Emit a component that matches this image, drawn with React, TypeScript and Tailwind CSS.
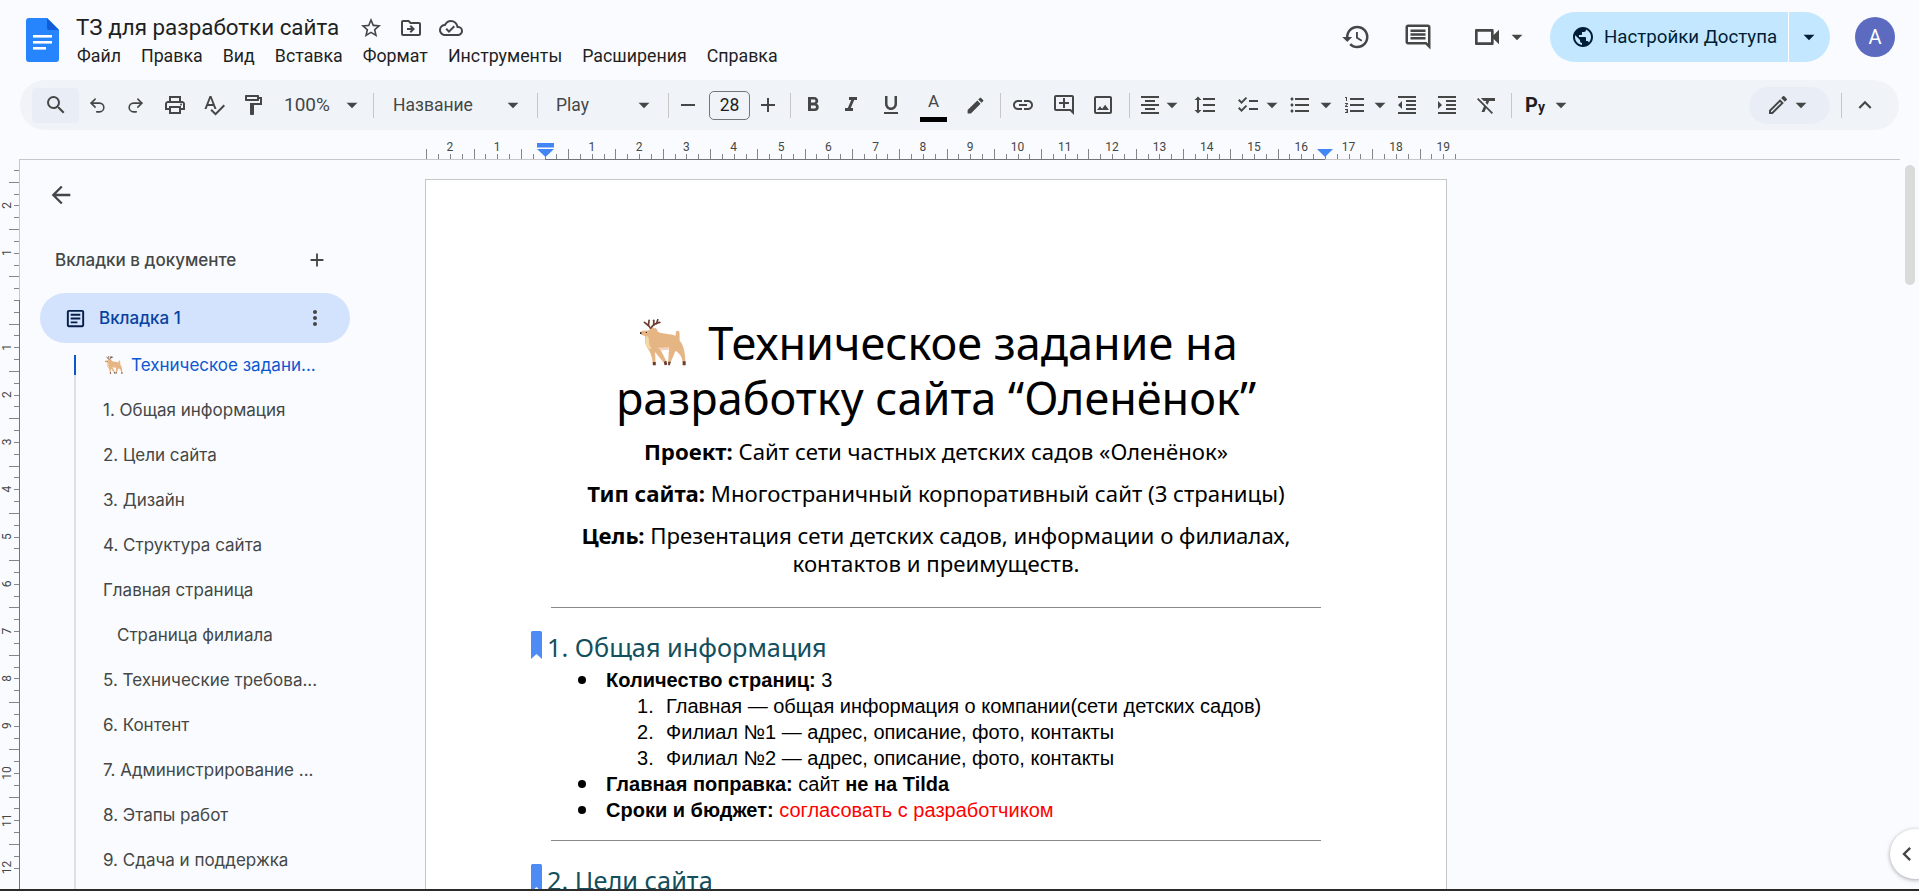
import {
  MdAdd,
  MdArrowBack,
  MdArrowDropDown,
  MdChecklist,
  MdChevronLeft,
  MdEdit,
  MdExpandLess,
  MdFormatAlignCenter,
  MdFormatBold,
  MdFormatClear,
  MdFormatIndentDecrease,
  MdFormatIndentIncrease,
  MdFormatItalic,
  MdFormatLineSpacing,
  MdFormatListBulleted,
  MdFormatListNumbered,
  MdFormatUnderlined,
  MdHistory,
  MdLink,
  MdMoreVert,
  MdOutlineAddComment,
  MdOutlineArticle,
  MdOutlineCloudDone,
  MdOutlineComment,
  MdOutlineDriveFileMove,
  MdOutlineEdit,
  MdOutlineFormatPaint,
  MdOutlineImage,
  MdOutlinePrint,
  MdOutlineVideocam,
  MdPublic,
  MdRemove,
  MdSearch,
  MdSpellcheck,
  MdStarBorder,
} from 'react-icons/md';
import { Redo2, Undo2 } from 'lucide-react';
import type { IconType } from 'react-icons';

const MENU = ['Файл', 'Правка', 'Вид', 'Вставка', 'Формат', 'Инструменты', 'Расширения', 'Справка'];

const OUTLINE = [
  { label: '1. Общая информация' },
  { label: '2. Цели сайта' },
  { label: '3. Дизайн' },
  { label: '4. Структура сайта' },
  { label: 'Главная страница' },
  { label: 'Страница филиала', nested: true },
  { label: '5. Технические требова...' },
  { label: '6. Контент' },
  { label: '7. Администрирование ...' },
  { label: '8. Этапы работ' },
  { label: '9. Сдача и поддержка' },
];

const CM = 47.3;

function Deer({ className }: { className: string }) {
  return (
    <svg viewBox="35 28 140 140" className={className}>
      <g fill="none" stroke="#6b3d2c" strokeWidth="5" strokeLinecap="round">
        <path d="M68 58 C62 46 56 44 48 38" />
        <path d="M60 47 L62 32" />
        <path d="M68 56 C72 44 82 40 94 38" />
        <path d="M76 46 L76 32" />
        <path d="M84 42 L88 30" />
      </g>
      <path
        d="M60 62 C72 52 85 50 88 66 C100 72 125 72 141 78 L142 66 C146 60 153 63 153 72 L153 92 C165 106 170 130 170 156 L162 156 C160 138 150 127 140 123 C136 135 129 150 126 158 L119 158 C120 142 120 127 122 119 L96 119 C101 131 110 145 114 156 L106 158 C96 146 86 133 79 126 C81 136 81 146 81 158 L73 158 C71 141 66 126 58 116 C48 102 50 86 50 79 L39 75 C33 72 36 66 42 63 Z"
        fill="#e6b584"
      />
      <path d="M52 80 C58 76 62 84 62 96 C62 106 66 112 70 118 L58 116 C50 104 50 88 52 80 Z" fill="#f4d9a8" />
      <path d="M88 114 L122 112 L122 119 L96 122 Z" fill="#f5d3c4" />
      <path d="M73 156 H82 V166 H73 Z M106 155 L114 153 L116 164 L108 166 Z M119 155 H127 L124 166 H119 Z M162 154 H171 V166 H162 Z" fill="#6b3d2c" />
      <circle cx="37" cy="70" r="3" fill="#3a2a25" />
      <circle cx="54" cy="68" r="2" fill="#3a2a25" />
    </svg>
  );
}

function DocsLogo() {
  return (
    <svg viewBox="0 0 33 44" className="w-[33px] h-[44px] shrink-0">
      <path d="M3 0 H21 L33 12 V41 a3 3 0 0 1 -3 3 H3 a3 3 0 0 1 -3 -3 V3 a3 3 0 0 1 3 -3 Z" fill="#2684fc" />
      <path d="M21 0 L33 12 H23 a2 2 0 0 1 -2 -2 Z" fill="#0f5ed7" />
      <rect x="7" y="17" width="19" height="2.6" fill="#fff" />
      <rect x="7" y="23" width="19" height="2.6" fill="#fff" />
      <rect x="7" y="29" width="13" height="2.6" fill="#fff" />
    </svg>
  );
}

function Tool({ icon: Icon, className = '', size = 24 }: { icon: IconType; className?: string; size?: number }) {
  return (
    <span className={'flex w-6 justify-center shrink-0 ' + className}>
      <Icon size={size} className="shrink-0" />
    </span>
  );
}

function Caret({ className = '' }: { className?: string }) {
  return (
    <span className={'flex w-5 justify-center shrink-0 ' + className}>
      <MdArrowDropDown size={26} className="shrink-0" />
    </span>
  );
}

function Sep({ className = '' }: { className?: string }) {
  return <span className={'w-px h-[25px] bg-[#c7c7c7] shrink-0 ' + className} />;
}

function Box({ className, children }: { className: string; children: React.ReactNode }) {
  return <span className={'flex justify-center shrink-0 ' + className}>{children}</span>;
}

function Header() {
  return (
    <header className="h-[80px] flex items-start shrink-0">
      <div className="ml-[26px] mt-[18px]">
        <DocsLogo />
      </div>
      <div className="ml-[17px]">
        <div className="mt-[13px] h-[30px] flex items-center text-[#444746]">
          <span className="w-[261px] text-[22.4px] text-[#1f1f1f] whitespace-nowrap [font-family:'Roboto',sans-serif]">
            ТЗ для разработки сайта
          </span>
          <Tool icon={MdStarBorder} className="ml-[22px]" />
          <Tool icon={MdOutlineDriveFileMove} className="ml-[16px]" />
          <Tool icon={MdOutlineCloudDone} className="ml-[16px]" />
        </div>
        <nav className="h-[26px] pl-[1px] flex items-center gap-[20px] text-[17.8px] text-[#1f1f1f] [font-family:'Roboto',sans-serif]">
          {MENU.map((m) => (
            <span key={m}>{m}</span>
          ))}
        </nav>
      </div>
      <div className="ml-auto pr-[24px] h-[74px] flex items-center text-[#444746]">
        <MdHistory size={30} />
        <MdOutlineComment size={30} className="ml-[32px]" />
        <MdOutlineVideocam size={32} className="ml-[38px]" />
        <Caret className="ml-[4px]" />
        <div className="ml-[23px] w-[280px] h-[50px] rounded-full bg-[#c2e7ff] flex items-center text-[#001d35]">
          <MdPublic size={24} className="ml-[21px] shrink-0" />
          <span className="ml-[9px] w-[172px] text-[18.7px] whitespace-nowrap [font-family:'Roboto',sans-serif]">
            Настройки Доступа
          </span>
          <span className="ml-[12px] w-px h-[50px] bg-white" />
          <Caret className="ml-[10px]" />
        </div>
        <div className="ml-[25px] w-10 h-10 rounded-full bg-[#5c6bc0] flex items-center justify-center text-white text-[20px] [font-family:'Roboto',sans-serif]">
          A
        </div>
      </div>
    </header>
  );
}

function Toolbar() {
  return (
    <div className="ml-[20px] w-[1879px] h-[50px] shrink-0 rounded-[25px] bg-[#f0f4f9] flex items-center pl-[12px] text-[#444746] text-[17.5px] [font-family:'Roboto',sans-serif]">
      <Box className="w-[47px] h-[35px] items-center bg-[#e9eef6] rounded-[4px]">
        <MdSearch size={24} className="shrink-0" />
      </Box>
      <Box className="w-[37px]">
        <Undo2 size={19} strokeWidth={2} />
      </Box>
      <Box className="w-[39px]">
        <Redo2 size={19} strokeWidth={2} />
      </Box>
      <Box className="w-[40px]">
        <MdOutlinePrint size={24} />
      </Box>
      <Box className="w-[38px]">
        <MdSpellcheck size={24} />
      </Box>
      <Box className="w-[39px]">
        <MdOutlineFormatPaint size={24} />
      </Box>
      <span className="ml-[12px] w-[46px] text-[19px]">100%</span>
      <Caret className="ml-[12px]" />
      <Sep className="ml-[11px]" />
      <span className="ml-[19px] w-[81px]">Название</span>
      <Caret className="ml-[29px]" />
      <Sep className="ml-[14px]" />
      <span className="ml-[18px] w-[34px]">Play</span>
      <Caret className="ml-[44px]" />
      <Sep className="ml-[14px]" />
      <Tool icon={MdRemove} className="ml-[7px]" />
      <span className="ml-[9px] w-[41px] h-[29px] rounded-[5px] border border-[#747775] flex items-center justify-center text-[#1f1f1f]">
        28
      </span>
      <Tool icon={MdAdd} className="ml-[6px]" />
      <Sep className="ml-[10px]" />
      <Tool icon={MdFormatBold} className="ml-[10px]" />
      <Tool icon={MdFormatItalic} className="ml-[14px]" />
      <Tool icon={MdFormatUnderlined} className="ml-[16px]" />
      <span className="ml-[17px] w-[27px] h-[35px] flex flex-col items-center shrink-0">
        <span className="h-[26px] leading-[26px] text-[17px]">A</span>
        <span className="mt-[3px] w-[27px] h-[5px] bg-black" />
      </span>
      <Tool icon={MdEdit} className="ml-[16px]" size={21} />
      <Sep className="ml-[13px]" />
      <Tool icon={MdLink} className="ml-[10px]" />
      <Tool icon={MdOutlineAddComment} className="ml-[17px]" />
      <Tool icon={MdOutlineImage} className="ml-[15px]" />
      <Sep className="ml-[14px]" />
      <Tool icon={MdFormatAlignCenter} className="ml-[8px]" />
      <Caret />
      <Tool icon={MdFormatLineSpacing} className="ml-[11px]" />
      <Tool icon={MdChecklist} className="ml-[19px]" />
      <Caret className="ml-[2px]" />
      <Tool icon={MdFormatListBulleted} className="ml-[6px]" />
      <Caret className="ml-[4px]" />
      <Tool icon={MdFormatListNumbered} className="ml-[7px]" />
      <Caret className="ml-[3px]" />
      <Tool icon={MdFormatIndentDecrease} className="ml-[5px]" />
      <Tool icon={MdFormatIndentIncrease} className="ml-[16px]" />
      <Tool icon={MdFormatClear} className="ml-[16px]" />
      <Sep className="ml-[12px]" />
      <span className="ml-[13px] w-[22px] font-bold text-[#1f1f1f] text-[20px] leading-none whitespace-nowrap">
        Р<span className="text-[14px]">у</span>
      </span>
      <Caret className="ml-[4px]" />
      <div className="ml-[178px] w-[81px] h-[37px] rounded-full bg-[#e9eef6] flex items-center pl-[17px] shrink-0">
        <MdOutlineEdit size={24} className="shrink-0" />
        <Caret className="ml-[1px]" />
      </div>
      <Sep className="ml-[11px]" />
      <Tool icon={MdExpandLess} className="ml-[11px]" size={26} />
    </div>
  );
}

function HRuler() {
  const ticks = Array.from({ length: 88 }, (_, i) => i - 10);
  return (
    <svg width="1919" height="30" className="block shrink-0">
      <line x1="19" x2="1900" y1="29.5" y2="29.5" stroke="#c7c7c7" />
      <line x1="545" x2="1325" y1="29.5" y2="29.5" stroke="#70757a" />
      {ticks.map((k) => {
        const x = Math.round(544.5 + (k * CM) / 4) + 0.5;
        const long = ((k % 4) + 4) % 4 === 2;
        return <line key={k} x1={x} x2={x} y1={long ? 19 : 24} y2="29" stroke="#80868b" />;
      })}
      {ticks
        .filter((k) => k % 4 === 0 && k !== 0)
        .map((k) => (
          <text
            key={k}
            x={544.5 + (k * CM) / 4}
            y="21"
            textAnchor="middle"
            fontSize="12"
            fill="#444746"
            fontFamily="Roboto, sans-serif"
          >
            {Math.abs(k / 4)}
          </text>
        ))}
      <rect x="537" y="13" width="17" height="4.5" fill="#4285f4" />
      <path d="M537 19 H554 L545.5 27 Z" fill="#4285f4" />
      <path d="M1317 19 H1333 L1325 27 Z" fill="#4285f4" />
    </svg>
  );
}

function VRuler() {
  const ticks = Array.from({ length: 60 }, (_, i) => i - 11);
  return (
    <svg width="20" height="729" className="block shrink-0">
      <line x1="19.5" x2="19.5" y1="0" y2="140" stroke="#c7c7c7" />
      <line x1="19.5" x2="19.5" y1="140" y2="729" stroke="#70757a" />
      {ticks.map((k) => {
        const y = Math.round(140 + (k * CM) / 4) + 0.5;
        const long = ((k % 4) + 4) % 4 === 2;
        return <line key={k} y1={y} y2={y} x1={long ? 9 : 14} x2="19" stroke="#80868b" />;
      })}
      {ticks
        .filter((k) => k % 4 === 0 && k !== 0)
        .map((k) => {
          const y = 140 + (k * CM) / 4;
          return (
            <text
              key={k}
              x="0"
              y="0"
              transform={`translate(11 ${y}) rotate(-90)`}
              textAnchor="middle"
              fontSize="12"
              fill="#444746"
              fontFamily="Roboto, sans-serif"
            >
              {Math.abs(k / 4)}
            </text>
          );
        })}
    </svg>
  );
}

function Sidebar() {
  return (
    <aside className="w-[405px] shrink-0 flex flex-col [font-family:'Inter',sans-serif]">
      <div className="h-[70px] flex items-center pl-[27px] text-[#444746] shrink-0">
        <MdArrowBack size={28} />
      </div>
      <div className="h-[60px] flex items-center pl-[35px] shrink-0 text-[#444746]">
        <span className="w-[251px] pt-[1px] text-[17px] font-medium whitespace-nowrap">Вкладки в документе</span>
        <MdAdd size={22} />
      </div>
      <div className="mt-[3px] ml-[20px] w-[310px] h-[50px] rounded-full bg-[#d3e3fd] flex items-center pl-[24px] shrink-0 text-[#0842a0]">
        <MdOutlineArticle size={23} className="text-[#041e49]" />
        <span className="ml-[12px] w-[204px] pt-[1px] text-[17px] font-medium">Вкладка 1</span>
        <MdMoreVert size={24} className="text-[#444746]" />
      </div>
      <div className="mt-[12px] ml-[54px] flex-1 border-l-2 border-[#e0e0e0] flex flex-col gap-[25px] text-[17px] text-[#444746] whitespace-nowrap">
        <div className="-ml-[2px] h-[20px] border-l-2 border-[#0b57d0] pl-[29px] flex items-center text-[#0b57d0]">
          <Deer className="w-[18px] h-[18px]" />
          <span className="ml-[8px] pt-[1px]">Техническое задани...</span>
        </div>
        {OUTLINE.map((item) => (
          <div
            key={item.label}
            className={item.nested ? 'h-[20px] leading-[20px] pl-[41px]' : 'h-[20px] leading-[20px] pl-[27px]'}
          >
            {item.label}
          </div>
        ))}
      </div>
    </aside>
  );
}

function SectionHeading({ children }: { children: string }) {
  return (
    <h2 className="relative h-[34px] -ml-[4px] leading-[32px] text-[25.3px] text-[#134f5c] [font-family:'Noto_Sans',sans-serif]">
      <svg viewBox="0 0 11 28" className="absolute -left-[16px] top-[0px] w-[11px] h-[28px]">
        <path d="M1.5 0 H9.5 A1.5 1.5 0 0 1 11 1.5 V28 L5.5 23 L0 28 V1.5 A1.5 1.5 0 0 1 1.5 0 Z" fill="#4d8bf5" />
      </svg>
      {children}
    </h2>
  );
}

function DocPage() {
  return (
    <div className="mt-[19px] w-[1022px] h-[710px] overflow-hidden shrink-0 bg-white border border-b-0 border-[#c7c7c7] pt-[135px] pl-[125px] pr-[125px] text-black">
      <h1 className="text-center text-[45px] leading-[55px] [font-family:'Noto_Sans',sans-serif] whitespace-nowrap">
        <span className="block pl-[6px]">
          <Deer className="inline-block align-[-6px] w-[47px] h-[47px] mr-[21px]" />
          Техническое задание на
        </span>
        <span className="block">разработку сайта “Оленёнок”</span>
      </h1>
      <div className="mt-[13px] text-center text-[22.2px] leading-[28px] [font-family:'Noto_Sans',sans-serif]">
        <p>
          <b>Проект:</b> Сайт сети частных детских садов «Оленёнок»
        </p>
        <p className="mt-[14px]">
          <b>Тип сайта:</b> Многостраничный корпоративный сайт (3 страницы)
        </p>
        <p className="mt-[14px]">
          <b>Цель:</b> Презентация сети детских садов, информации о филиалах,
          <br />
          контактов и преимуществ.
        </p>
      </div>
      <div className="mt-[29px] h-px bg-[#888888]" />
      <div className="mt-[23px]">
        <SectionHeading>1. Общая информация</SectionHeading>
      </div>
      <div className="mt-[2px] text-[20px] leading-[26px] [font-family:'Liberation_Sans',sans-serif]">
        <BulletRow>
          <b>Количество страниц:</b> 3
        </BulletRow>
        <NumberRow n={1}>Главная — общая информация о компании(сети детских садов)</NumberRow>
        <NumberRow n={2}>Филиал №1 — адрес, описание, фото, контакты</NumberRow>
        <NumberRow n={3}>Филиал №2 — адрес, описание, фото, контакты</NumberRow>
        <BulletRow>
          <b>Главная поправка:</b> сайт <b>не на Tilda</b>
        </BulletRow>
        <BulletRow>
          <b>Сроки и бюджет:</b> <span className="text-[#ff0000]">согласовать с разработчиком</span>
        </BulletRow>
      </div>
      <div className="mt-[17px] h-px bg-[#888888]" />
      <div className="mt-[23px]">
        <SectionHeading>2. Цели сайта</SectionHeading>
      </div>
    </div>
  );
}

function BulletRow({ children }: { children: React.ReactNode }) {
  return (
    <div className="flex items-center h-[26px] pl-[27px]">
      <span className="w-2 h-2 rounded-full bg-black shrink-0" />
      <span className="ml-[20px] whitespace-nowrap">{children}</span>
    </div>
  );
}

function NumberRow({ n, children }: { n: number; children: React.ReactNode }) {
  return (
    <div className="flex items-center h-[26px] pl-[86px]">
      <span className="w-[29px] shrink-0">{n}.</span>
      <span className="whitespace-nowrap">{children}</span>
    </div>
  );
}

export default function App() {
  return (
    <div className="relative h-[891px] w-full overflow-hidden bg-[#f9fbfe] flex flex-col">
      <Header />
      <Toolbar />
      <HRuler />
      <div className="h-[729px] flex shrink-0 overflow-hidden">
        <VRuler />
        <Sidebar />
        <DocPage />
      </div>
      <div className="h-[2px] bg-[#2b2b2b] shrink-0" />

      {/* scrollbar + side panel toggle sit over the canvas */}
      <div className="absolute left-[1905px] top-[165px] w-[10px] h-[120px] rounded-full bg-[#dadada]" />
      <div className="absolute left-[1890px] top-[829px] w-[50px] h-[50px] rounded-full bg-white shadow-[0_1px_4px_rgba(0,0,0,0.35)] flex items-center pl-[3px] text-[#444746]">
        <MdChevronLeft size={28} />
      </div>
    </div>
  );
}
